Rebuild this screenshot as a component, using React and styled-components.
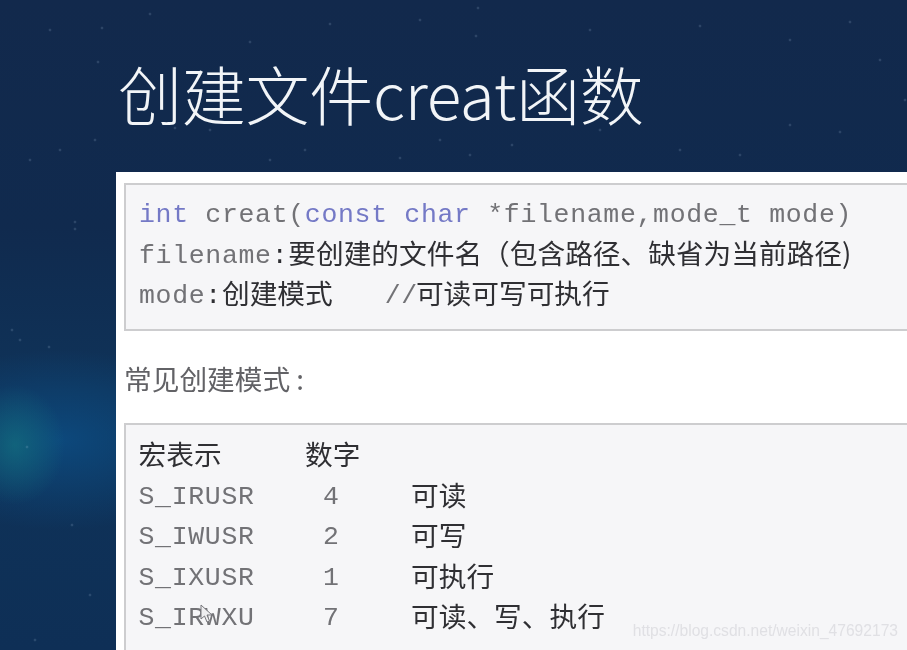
import React from "react";
import styled, { createGlobalStyle } from "styled-components";

const stars = [
  [50, 30], [98, 62], [102, 28], [150, 14], [250, 42], [420, 20], [478, 8], [590, 30],
  [700, 26], [790, 40], [850, 22], [476, 36], [210, 130], [175, 128], [270, 160], [305, 150],
  [400, 158], [440, 140], [512, 145], [600, 130], [680, 150], [740, 155], [790, 125], [840, 132],
  [30, 160], [60, 150], [95, 140], [75, 222], [75, 229], [12, 330], [20, 340], [49, 347],
  [27, 447], [72, 525], [90, 595], [35, 640], [905, 100], [470, 155], [880, 60], [330, 24],
];

const starLayers = stars
  .map(([x, y]) => `radial-gradient(circle at ${x}px ${y}px, rgba(190,215,240,.26) 0, rgba(190,215,240,0) 1.8px)`)
  .join(",");

const macros = [
  { name: "S_IRUSR", value: "4", desc: "可读" },
  { name: "S_IWUSR", value: "2", desc: "可写" },
  { name: "S_IXUSR", value: "1", desc: "可执行" },
  { name: "S_IRWXU", value: "7", desc: "可读、写、执行" },
];

const App = () => {
  return (
    <Slide>
      <GlobalStyle />
      <Title>创建文件creat函数</Title>
      <Panel>
        <CodeBox>
          <Line>
            <Keyword>int</Keyword> creat(<Keyword>const</Keyword> <Keyword>char</Keyword> *filename,mode_t mode)
          </Line>
          <Line>
            filename<Colon>:</Colon><Cjk>要创建的文件名（包含路径、缺省为当前路径)</Cjk>
          </Line>
          <Line>
            mode<Colon>:</Colon><Cjk>创建模式</Cjk><Comment>//</Comment><Cjk>可读可写可执行</Cjk>
          </Line>
        </CodeBox>
        <Caption>常见创建模式 :</Caption>
        <TableBox>
          <MacroRow>
            <TableCjk>宏表示</TableCjk>
            <TableCjk>数字</TableCjk>
          </MacroRow>
          {macros.map((m) => (
            <MacroRow key={m.name}>
              <span>{m.name}</span>
              <MacroValue>{m.value}</MacroValue>
              <TableCjk>{m.desc}</TableCjk>
            </MacroRow>
          ))}
        </TableBox>
        <Pointer viewBox="0 0 14 20">
          <path d="M1 1 L1 15 L4.5 12 L7 18 L9.5 17 L7 11 L12 11 Z" fill="#eeeef0" stroke="#77777c" strokeWidth="1" />
        </Pointer>
        <Watermark>https://blog.csdn.net/weixin_47692173</Watermark>
      </Panel>
    </Slide>
  );
};

export default App;

const GlobalStyle = createGlobalStyle`
  html, body {
    margin: 0;
    padding: 0;
    background: #0f2747;
  }
`;

const Slide = styled.div`
  width: 907px;
  height: 650px;
  overflow: hidden;
  display: flex;
  flex-direction: column;
  filter: blur(0.45px);
  background-color: #0f2747;
  background-image: ${starLayers},
    radial-gradient(ellipse 50px 60px at 15px 445px, rgba(20, 120, 130, 0.6), rgba(20, 120, 130, 0)),
    radial-gradient(ellipse 170px 90px at 60px 440px, rgba(12, 76, 130, 0.85), rgba(12, 76, 130, 0)),
    linear-gradient(180deg, #12294c 0%, #102a4e 35%, #0f3359 60%, #0e2f56 100%);
`;

const Title = styled.h1`
  margin: 0;
  height: 172px;
  box-sizing: border-box;
  padding: 46px 0 0 118px;
  font-family: "Noto Sans CJK SC", "Noto Sans", sans-serif;
  font-size: 64px;
  line-height: 92px;
  font-weight: 200;
  letter-spacing: -0.25px;
  color: #f2f5f8;
`;

const Panel = styled.div`
  position: relative;
  flex: 1;
  margin-left: 116px;
  padding: 11px 0 0 8px;
  background: #fff;
  display: flex;
  flex-direction: column;
  min-height: 0;
`;

const CodeBox = styled.div`
  box-sizing: border-box;
  height: 148px;
  margin-right: -4px;
  padding: 10px 0 0 13px;
  background: #f6f6f8;
  border: 2px solid #cdcdcf;
  font-family: "Liberation Mono", monospace;
  font-size: 26.5px;
  letter-spacing: 0.68px;
  color: #727276;
`;

const Line = styled.div`
  height: 40.5px;
  line-height: 40.5px;
  white-space: pre;
`;

const Keyword = styled.span`
  color: #7479c6;
`;

const Colon = styled.span`
  color: #2f2f33;
`;

const Comment = styled.span`
  margin-left: 52px;
  margin-right: -2px;
`;

const Cjk = styled.span`
  font-family: "Noto Sans CJK SC", sans-serif;
  font-size: 27.7px;
  line-height: 1;
  letter-spacing: 0;
  vertical-align: -1px;
  color: #2f2f33;
`;

const TableCjk = styled(Cjk)`
  margin-top: -5px;
`;

const Caption = styled.div`
  height: 92px;
  box-sizing: border-box;
  padding-top: 26px;
  font-family: "Noto Sans CJK SC", sans-serif;
  font-size: 27.7px;
  line-height: 42px;
  color: #626266;
`;

const TableBox = styled.div`
  flex: 1;
  margin-right: -4px;
  padding: 11px 0 0 12.5px;
  background: #f6f6f8;
  border: 2px solid #cdcdcf;
  border-bottom: 0;
  font-family: "Liberation Mono", monospace;
  font-size: 26.5px;
  color: #727276;
`;

const MacroRow = styled.div`
  display: grid;
  grid-template-columns: 166.5px 106px 1fr;
  align-items: center;
  height: 40.6px;
  line-height: 40.6px;
  white-space: nowrap;
  letter-spacing: 0.68px;
`;

const MacroValue = styled.span`
  padding-left: 18px;
`;

const Pointer = styled.svg`
  position: absolute;
  left: 84px;
  top: 432px;
  width: 14px;
  height: 20px;
`;

const Watermark = styled.div`
  position: absolute;
  right: 9px;
  bottom: 10px;
  font-family: "Liberation Sans", sans-serif;
  font-size: 15.6px;
  color: #e0e0e4;
`;
